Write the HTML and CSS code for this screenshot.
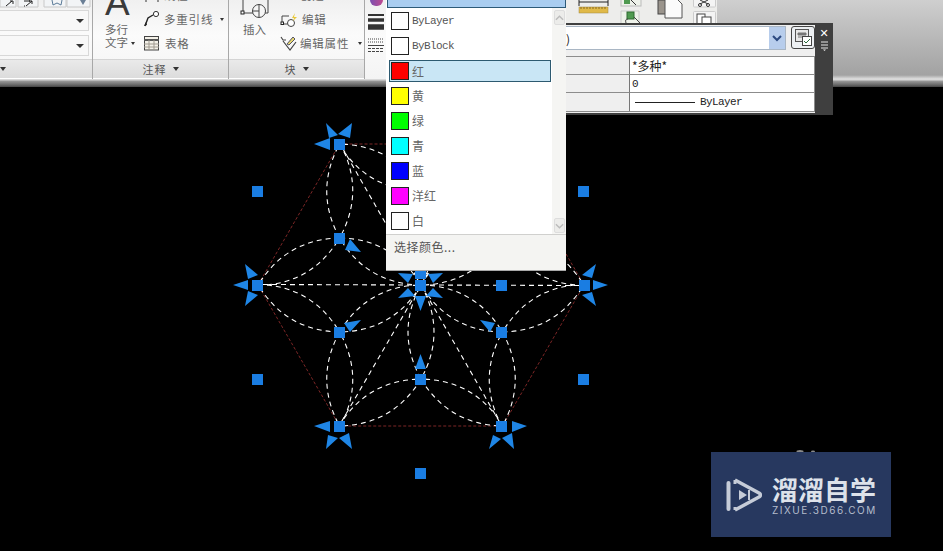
FILE: index.html
```html
<!DOCTYPE html>
<html lang="zh">
<head>
<meta charset="utf-8">
<title>CAD</title>
<link rel="stylesheet" href="styles.css">
</head>
<body>
<div class="page">
  <header class="top">
    <div class="ribbon">
      <section class="panel p1">
        <div class="body body1">
          <div class="tools">
            <svg width="92" height="8" viewBox="0 0 92 8"><path class="ti" d="M0 0v7H16V0M18 0v7H38V0M44 0v7H66V0M67 0v7H90V0"/><path d="M6 6l6-5M10 1h3v3M24 1h6M30 1l-1 0M24 6h1M26 6l6-5M29 1h3v3" stroke="#222" fill="none"/><path d="M52 0l1 5 4-2 4 2 1-5" stroke="#5a7a98" fill="none"/><path d="M80 0h6l-3 5z" fill="#6a7f96"/></svg>
          </div>
          <div class="combo"><i class="caret"></i></div>
          <div class="combo"><i class="caret"></i></div>
        </div>
        <div class="ptitle ptitle1"><i class="caret dark"></i></div>
      </section>
      <section class="panel p2">
        <div class="body">
          <div class="bigtool">
            <span class="biga">A</span>
            <span class="bigl">多行</span>
            <span class="bigl">文字<i class="mini"></i></span>
          </div>
          <div class="rows">
            <div class="row"><svg class="ic" width="18" height="14" viewBox="0 0 18 14"><path d="M3 0v14M15 0v14" stroke="#333"/></svg><span>线性</span></div>
            <div class="row"><svg class="ic" width="18" height="16" viewBox="0 0 18 16"><path d="M2 15l3-8 5-3" stroke="#222" stroke-width="1.4" fill="none"/><path d="M1 15l2-4 1 3z" fill="#222"/><circle cx="13" cy="3" r="2.6" fill="#fff" stroke="#333"/></svg><span>多重引线</span><i class="mini far"></i></div>
            <div class="row"><svg class="ic" width="17" height="16" viewBox="0 0 17 16"><rect x="1.500" y="1.500" width="14" height="13.500" fill="#f4f1e8" stroke="#444"/><path d="M1 5h15" stroke="#555" stroke-width="2"/><path d="M1 9h15M1 12h15M6 5v10M11 5v10" stroke="#a09a90"/></svg><span class="wide">表格</span></div>
          </div>
        </div>
        <div class="ptitle"><span>注释</span><i class="caret dark"></i></div>
      </section>
      <section class="panel p3">
        <div class="body">
          <div class="bigtool ins">
            <svg width="30" height="19" viewBox="0 0 30 19"><path d="M3 0v13H18M28 0v13h-3" fill="none" stroke="#444"/><rect x="1" y="11" width="3" height="3" fill="#fff" stroke="#222"/><circle cx="19" cy="11" r="6.500" fill="#f6f6f6" stroke="#444"/><path d="M19 4v13M12 11h7" stroke="#444"/></svg>
            <span class="bigl">插入</span>
          </div>
          <div class="rows r3">
            <div class="row"><svg class="ic" width="18" height="14" viewBox="0 0 18 14"><path d="M2 3h4" stroke="#333"/><circle cx="10" cy="2" r="4" fill="#fff" stroke="#333"/></svg><span>创建</span></div>
            <div class="row"><svg class="ic" width="18" height="16" viewBox="0 0 18 16"><path d="M9 5H2v8h7" fill="none" stroke="#444"/><circle cx="11" cy="12" r="3.500" fill="#fff" stroke="#444"/><path d="M12 7l3-5-1 4h3l-4 4 1-3z" fill="#e8c93a"/><rect x="1" y="11" width="2.500" height="2.500" fill="#fff" stroke="#222"/></svg><span class="wide">编辑</span></div>
            <div class="row"><svg class="ic" width="18" height="16" viewBox="0 0 18 16"><path d="M1 2l2 3h3M3 6l7 9 6-8" fill="none" stroke="#444" stroke-width="1.200"/><path d="M7 9l6-7 2 2-6 6z" fill="#e8d870" stroke="#556"/></svg><span>编辑属性</span><i class="mini far2"></i></div>
          </div>
        </div>
        <div class="ptitle"><span>块</span><i class="caret dark"></i></div>
      </section>
      <section class="panel p4">
        <div class="lines">
          <i class="ball"></i>
          <svg width="17" height="16" viewBox="0 0 17 16"><path d="M0 1h16" stroke="#333" stroke-width="2"/><path d="M0 6h16" stroke="#333" stroke-width="3.500"/><path d="M0 13h16" stroke="#333" stroke-width="5.500"/></svg>
          <svg class="ltype" width="17" height="14" viewBox="0 0 17 14"><path d="M0 1h16M0 4h16" stroke="#444" stroke-dasharray="1 1"/><path d="M0 7.500h16" stroke="#444"/><path d="M0 10.500h16M0 13.500h16" stroke="#444" stroke-dasharray="3 1"/></svg>
        </div>
      </section>
      <section class="panel p5">
        <div class="tail">
          <svg width="32" height="14" viewBox="0 0 32 14"><path d="M1 0v6M30 0v6M1 2h29" stroke="#222" fill="none"/><rect x="1" y="7" width="29" height="6" fill="#e0b948" stroke="#a08840" stroke-width=".5"/><path d="M3 7v2M6 7v2M9 7v2M12 7v2M15 7v2M18 7v2M21 7v2M24 7v2M27 7v2" stroke="#8a6a20"/></svg>
          <div class="stack gap-r">
            <svg width="22" height="7" viewBox="0 0 22 7"><rect x="1" y="-3" width="20" height="9" fill="#eef2ea" stroke="#bbb"/><rect x="4" y="-2" width="6" height="6" fill="#4f9a50"/><path d="M11 0l5 5" stroke="#333"/></svg>
            <svg width="22" height="13" viewBox="0 0 22 13"><path d="M1 13V1h18v12" fill="#eef2ea" stroke="#ccc"/><rect x="7" y="2" width="7" height="7" fill="#4f9a50" stroke="#2e6a30"/><path d="M6 13c-1-3 0-4 2-4M14 7l6 6" stroke="#444" fill="none"/></svg>
          </div>
          <svg class="docs" width="27" height="19" viewBox="0 0 27 19"><rect x="1" y="0" width="11" height="14" fill="#9a948c" stroke="#444"/><path d="M8 0v18h17V4l-4-4" fill="#fbfbfb" stroke="#555"/></svg>
          <div class="stack">
            <svg width="23" height="8" viewBox="0 0 23 8"><rect x=".5" y="-2" width="22" height="9" rx="1" fill="#f4f4f4" stroke="#ccc"/><path d="M7 0l8 4M15 0L7 4" stroke="#333"/><circle cx="7" cy="5" r="1.500" fill="none" stroke="#333"/><circle cx="15" cy="5" r="1.500" fill="none" stroke="#333"/></svg>
            <svg width="23" height="13" viewBox="0 0 23 13"><rect x=".5" y=".5" width="22" height="14" rx="1" fill="#f4f4f4" stroke="#ccc"/><rect x="4" y="3" width="8" height="11" fill="#fff" stroke="#444"/><rect x="9" y="6" width="9" height="9" fill="#fff" stroke="#444"/></svg>
          </div>
        </div>
      </section>
      <div class="gradient"></div>
    </div>
    <div class="edge"></div>
  </header>

  <svg class="drawing" width="943" height="551" viewBox="0 0 943 551">
    <defs>
      <g id="tri" class="petal">
        <path d="M0 0Q26 47 0 94Q-26 47 0 0"/>
        <path d="M0 94Q-28 140 -82 141Q-54 95 0 94"/>
        <path d="M0 94Q28 140 82 141Q54 95 0 94"/>
        <path d="M0 0L-82 141"/>
      </g>
    </defs>
    <path class="hex" d="M339.500 144H502.500L584 285L502.500 426H339.500L258 285Z"/>
    <g transform="translate(421 285)">
      <use href="#tri"/>
      <use href="#tri" transform="rotate(60)"/>
      <use href="#tri" transform="rotate(120)"/>
      <use href="#tri" transform="rotate(180)"/>
      <use href="#tri" transform="rotate(240)"/>
      <use href="#tri" transform="rotate(300)"/>
    </g>
    <g class="arrows">
      <path d="M314 144l16-6v12zM326 123l12 12-9 3zM352 123l-2 15-12-4z"/>
      <path d="M233 285l15-5v10zM245 264l13 11-10 4zM245 306l13-11-10-4z"/>
      <path d="M608 285l-15-5v10zM596 264l-14 11 10 3zM596 306l-14-11 10-3z"/>
      <path d="M314 426l16-5v11zM326 449l2-14 10 3zM352 449l-3-16-10 5z"/>
      <path d="M527 426l-15-5v11zM489 449l4-14 8 4zM514 449l-2-16-10 5z"/>
      <path d="M398 273l15 1-5 9zM443 273l-15 1 5 9zM398 298l10-10 7 8zM443 298l-10-10-7 8zM420.500 311l-5.500-15h11z"/>
      <path d="M345 250l16 2-11-13zM344 323l17-3-11 12zM480 320l15 3-5 9zM420.500 354l-5.500 15h11z"/>
    </g>
    <g class="grips">
      <rect x="415" y="268" width="11" height="11"/>
      <rect x="334" y="139" width="11" height="11"/>
      <rect x="252" y="280" width="11" height="11"/>
      <rect x="579" y="280" width="11" height="11"/>
      <rect x="334" y="421" width="11" height="11"/>
      <rect x="496" y="421" width="11" height="11"/>
      <rect x="415" y="280" width="11" height="11"/>
      <rect x="496" y="280" width="11" height="11"/>
      <rect x="334" y="233" width="11" height="11"/>
      <rect x="334" y="327" width="11" height="11"/>
      <rect x="496" y="327" width="11" height="11"/>
      <rect x="415" y="374" width="11" height="11"/>
      <rect x="252" y="186" width="11" height="11"/>
      <rect x="578" y="186" width="11" height="11"/>
      <rect x="252" y="374" width="11" height="11"/>
      <rect x="578" y="374" width="11" height="11"/>
      <rect x="415" y="468" width="11" height="11"/>
    </g>
    <ellipse class="smudge" cx="800" cy="451.500" rx="3.500" ry="1.500"/>
    <ellipse class="smudge" cx="813" cy="451.500" rx="2" ry="1"/>
  </svg>

  <div class="menu">
    <div class="menu-sel"></div>
    <div class="menu-main">
      <ul class="list">
        <li class="item"><i class="sw white"></i><span class="latin">ByLayer</span></li>
        <li class="item"><i class="sw white"></i><span class="latin">ByBlock</span></li>
        <li class="item active"><i class="sw red"></i><span>红</span></li>
        <li class="item"><i class="sw yellow"></i><span>黄</span></li>
        <li class="item"><i class="sw green"></i><span>绿</span></li>
        <li class="item"><i class="sw cyan"></i><span>青</span></li>
        <li class="item"><i class="sw blue"></i><span>蓝</span></li>
        <li class="item"><i class="sw magenta"></i><span>洋红</span></li>
        <li class="item"><i class="sw white"></i><span>白</span></li>
      </ul>
      <div class="scroll">
        <div class="sbtn"><svg width="10" height="6" viewBox="0 0 10 6"><path d="M1 5l4-4 4 4" fill="none" stroke="#bbb" stroke-width="1.500"/></svg></div>
        <div class="sbtn"><svg width="10" height="6" viewBox="0 0 10 6"><path d="M1 1l4 4 4-4" fill="none" stroke="#bbb" stroke-width="1.500"/></svg></div>
      </div>
    </div>
    <div class="menu-foot">选择颜色...</div>
  </div>

  <aside class="props">
    <div class="props-main">
      <div class="props-top">
        <div class="pcombo"><span>)</span><i class="pdrop"><svg width="10" height="7" viewBox="0 0 10 7"><path d="M1 1l4 4 4-4" fill="none" stroke="#2c4a80" stroke-width="2"/></svg></i></div>
        <div class="pbtn"><svg width="17" height="17" viewBox="0 0 17 17"><rect x=".5" y=".5" width="13" height="12" fill="#e8e8e8" stroke="#555"/><path d="M3 4h8v2H3zM3 8h4" fill="#777" stroke="#777"/><rect x="7.500" y="7.500" width="9" height="9" fill="#fff" stroke="#444"/><path d="M9 12l2 2 4-4" fill="none" stroke="#2a6a3a"/></svg></div>
      </div>
      <div class="ptable">
        <div class="pk"></div><div class="pv cjk">*多种*</div>
        <div class="pk"></div><div class="pv">0</div>
        <div class="pk"></div><div class="pv"><i class="ln"></i>ByLayer</div>
      </div>
    </div>
    <div class="props-side">
      <span class="x">✕</span>
      <svg width="9" height="10" viewBox="0 0 9 10"><path d="M1 1h7M1 4h7M1 7h7" stroke="#e8e8e8"/><path d="M3 8.500h3l-1.500 1.500z" fill="#e8e8e8"/></svg>
    </div>
  </aside>

  <div class="mark">
    <svg width="36" height="36" viewBox="0 0 36 36"><path d="M2.500 6v26" stroke="#c6ccd8" stroke-width="4" stroke-linecap="round"/><path d="M9 3l24 13q3 2 0 4L9 33" fill="none" stroke="#c6ccd8" stroke-width="3.500" stroke-linejoin="round"/><path d="M9 3v4M9 33v-3" stroke="#c6ccd8" stroke-width="3"/><path d="M13 13l8 5-8 5z" fill="#c6ccd8"/><path d="M23 13v10" stroke="#c6ccd8" stroke-width="2"/></svg>
    <div class="mark-t">
      <b>溜溜自学</b>
      <span>ZIXUE.3D66.COM</span>
    </div>
  </div>
</div>
</body>
</html>
```

FILE: styles.css
```css
* { box-sizing: border-box; }
html, body { margin: 0; padding: 0; background: #000; }
.page { position: relative; width: 943px; height: 551px; overflow: hidden; background: #000; font-family: "Noto Sans CJK SC", "Noto Sans", sans-serif; }
.top { height: 87px; }
.ribbon { display: flex; height: 79px; }
.edge { height: 8px; background: linear-gradient(#d8d8d8 0, #d8d8d8 1px, #9a9a9a 2px, #666 6px, #444 8px); }
.panel { display: flex; flex-direction: column; height: 79px; border-right: 1px solid #a8a8a8; background: linear-gradient(#f0f0f0, #fbfbfb 45%, #f4f4f4); }
.p1 { width: 93px; }
.p2 { width: 136px; }
.p3 { width: 136px; }
.p4 { width: 22px; border-right: 0; }
.p5 { width: 330px; border-right: 0; background: #ededeb; }
.gradient { flex: 1; background: linear-gradient(#cfcfcf, #a2a2a2 95%, #dedede); }
.body { height: 59px; display: flex; overflow: hidden; }
.body1 { flex-direction: column; }
.tools { height: 8px; flex: none; display: flex; }
.combo { height: 21px; width: 89px; margin-bottom: 2px; margin-top: 2px; border: 1px solid #d8d8d8; border-left: 0; background: #f8f8f8; display: flex; align-items: center; justify-content: flex-end; padding-right: 4px; }
.ti { fill: #f2f4f6; stroke: #c8c8c8; }
.caret { display: block; width: 0; height: 0; border-left: 4px solid transparent; border-right: 4px solid transparent; border-top: 4px solid #333; }
.caret.dark { border-left-width: 3.500px; border-right-width: 3.500px; }
.ptitle { height: 20px; border-top: 1px solid #d4d4d4; border-bottom: 1px solid #fff; background: linear-gradient(#eaeaea, #dcdcdc); display: flex; align-items: center; justify-content: center; gap: 6px; font-size: 11px; letter-spacing: 1px; color: #555; }
.ptitle1 { justify-content: flex-start; padding-left: 0; }
.mini { display: inline-block; width: 0; height: 0; margin-left: 3px; vertical-align: middle; border-left: 2.500px solid transparent; border-right: 2.500px solid transparent; border-top: 3px solid #333; }
.far { margin-left: 7px; }
.far2 { margin-left: 9px; }
.bigtool { width: 50px; padding-left: 12px; display: flex; flex-direction: column; justify-content: flex-end; align-items: flex-start; padding-bottom: 10px; flex: none; }
.biga { font-family: "Liberation Sans", sans-serif; font-size: 37px; line-height: 24px; height: 24px; color: #3a3a3a; margin-bottom: 8px; }
.bigl { font-size: 11.500px; line-height: 13px; color: #666; white-space: nowrap; }
.rows { display: flex; flex-direction: column; justify-content: flex-end; padding-bottom: 4px; }
.row { flex: none; height: 24px; display: flex; align-items: center; font-size: 11.500px; color: #666; letter-spacing: .8px; white-space: nowrap; }
.ic { flex: none; margin-right: 3px; }
.wide { margin-left: 2px; }
.ins { width: 51px; align-items: center; padding: 0 0 23px 0; }
.ins svg { margin-bottom: 4px; }
.r3 .row .ic { margin-right: 2px; }
.lines { display: flex; flex-direction: column; align-items: center; width: 22px; padding-left: 1px; }
.ball { display: block; width: 13px; height: 6px; margin-bottom: 8px; border-radius: 0 0 7px 7px; background: linear-gradient(90deg, #7a4fb0, #c04a90); flex: none; }
.ltype { margin-top: 8px; }
.tail { display: flex; align-items: flex-start; padding-left: 191px; height: 24px; }
.tail .stack { display: flex; flex-direction: column; gap: 3px; width: 23px; margin-left: 10px; }
.tail .stack.gap-r { margin-right: 14px; }
.docs { margin-right: -1px; }
.drawing { position: absolute; left: 0; top: 0; }
.hex { fill: none; stroke: #7c2626; stroke-width: 1; stroke-dasharray: 3 2; }
.petal path { fill: none; stroke: #fff; stroke-width: 1.100; stroke-dasharray: 5 4; }
.arrows path { fill: #1f86e6; }
.grips rect { fill: #1a7de2; }
.smudge { fill: #8a8a8a; }
.menu { position: absolute; left: 386px; top: 0; width: 180px; height: 271px; background: #fff; border-bottom: 1px solid #a8a8a8; display: flex; flex-direction: column; }
.menu-sel { height: 8px; flex: none; margin: 0 0 0 1px; background: #a9cdf0; border: 1px solid #2d5a78; border-top: 0; }
.menu-main { height: 227px; flex: none; display: flex; border-bottom: 1px solid #d0d0ce; }
.list { width: 166px; margin: 0; padding: 0; list-style: none; }
.item { height: 25px; padding-left: 5px; display: flex; align-items: center; gap: 3px; font-size: 12px; color: #666; }
.item.active { margin: 2px 1px 1px 3px; height: 22px; padding-left: 1px; background: #c9e6f5; border: 1px solid #2d5a70; }
.sw { display: block; width: 18px; height: 18px; border: 1px solid #222; flex: none; }
.latin { font-family: "Liberation Mono", monospace; font-size: 11px; letter-spacing: -.6px; color: #555; }
.white { background: #fff; }
.red { background: #f00; }
.yellow { background: #ff0; }
.green { background: #0f0; }
.cyan { background: #0ff; }
.blue { background: #00f; }
.magenta { background: #f0f; }
.scroll { width: 14px; background: #f5f5f3; display: flex; flex-direction: column; justify-content: space-between; padding: 2px 0 1px; align-items: center; }
.sbtn { width: 11px; height: 15px; background: #ececea; border: 1px solid #ddd; border-radius: 2px; display: flex; align-items: center; justify-content: center; }
.menu-foot { flex: 1; background: #f4f4f2; font-size: 12px; color: #555; padding: 3px 0 0 8px; letter-spacing: .5px; }
.props { position: absolute; left: 566px; top: 23px; width: 267px; height: 92px; display: flex; background: #3f3f3f; padding-top: 2px; padding-bottom: 2px; }
.props-main { width: 249px; background: #efefef; padding-top: 1px; }
.props-top { display: flex; height: 25px; gap: 5px; }
.pcombo { width: 220px; height: 24px; background: #fff; border: 1px solid #a9b6c4; border-left: 0; display: flex; align-items: center; justify-content: space-between; font-size: 12px; color: #222; padding-right: 0; }
.pdrop { width: 16px; height: 22px; background: #b7cdec; display: flex; align-items: center; justify-content: center; }
.pbtn { width: 24px; height: 23px; border: 1px solid #444; border-radius: 3px; background: #eceff2; display: flex; align-items: center; justify-content: center; }
.ptable { display: grid; grid-template-columns: 64px 185px; grid-auto-rows: 18px; margin-top: 5px; border-top: 1px solid #8c8c8c; border-bottom: 1px solid #8c8c8c; height: 56px; }
.pk { background: #efefef; border-bottom: 1px solid #8c8c8c; border-right: 1px solid #777; }
.pv { background: #fff; border-bottom: 1px solid #8c8c8c; border-right: 1px solid #8c8c8c; padding-left: 2px; font-family: "Liberation Mono", monospace; font-size: 11px; letter-spacing: -.6px; color: #222; display: flex; align-items: center; white-space: nowrap; }
.pv.cjk { font-family: "Noto Sans CJK SC", sans-serif; font-size: 12px; letter-spacing: 0; }
.pv:last-child, .pk:nth-last-child(2) { border-bottom: 0; }
.ln { display: block; width: 60px; height: 1px; background: #222; margin: 0 5px 0 3px; }
.props-side { flex: 1; display: flex; flex-direction: column; align-items: center; color: #fff; padding: 2px 0 0; }
.x { font-family: "DejaVu Sans", sans-serif; font-size: 11px; font-weight: bold; line-height: 13px; height: 14px; }
.mark { position: absolute; left: 711px; top: 452px; width: 180px; height: 85px; background: #27385f; display: flex; align-items: center; padding-left: 15px; gap: 10px; }
.mark-t { display: flex; flex-direction: column; }
.mark-t b { font-size: 26px; line-height: 30px; color: #dde2ea; font-weight: 700; white-space: nowrap; }
.mark-t span { font-family: "Inter", sans-serif; font-size: 10px; line-height: 12px; letter-spacing: 1.5px; color: #b4bccc; white-space: nowrap; }
```
